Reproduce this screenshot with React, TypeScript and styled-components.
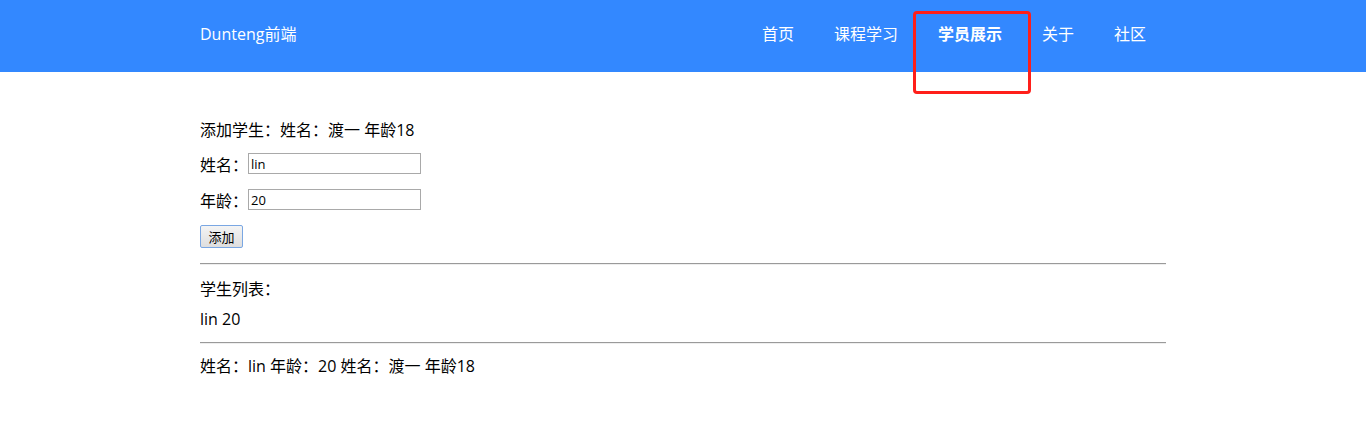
import React from "react";
import styled, { createGlobalStyle } from "styled-components";

const Global = createGlobalStyle`
  html, body { margin: 0; padding: 0; background: #fff; }
  body { font-family: "Open Sans", "Noto Sans CJK SC", sans-serif; color: #000; }
`;

const Header = styled.header`
  height: 72px;
  background: #3388ff;
`;

const Inner = styled.div`
  box-sizing: border-box;
  width: 966px;
  margin: 0 auto;
  height: 100%;
  display: flex;
  align-items: center;
  justify-content: space-between;
`;

const Brand = styled.div`
  color: #fff;
  font-size: 16px;
  line-height: 21px;
  margin-bottom: 3px;
`;

const Nav = styled.nav`
  display: flex;
  height: 100%;
`;

const NavItem = styled.a<{ $active?: boolean }>`
  position: relative;
  display: flex;
  align-items: center;
  box-sizing: border-box;
  height: 100%;
  padding: 0 20px 3px;
  color: #fff;
  font-size: 16px;
  line-height: 21px;
  font-weight: ${(p) => (p.$active ? 700 : 400)};
  text-decoration: none;
`;

const Highlight = styled.span`
  position: absolute;
  left: -5px;
  top: 11px;
  width: 118px;
  height: 83px;
  box-sizing: border-box;
  border: 3px solid #ff1f1a;
  border-radius: 4px;
  pointer-events: none;
`;

const Main = styled.main`
  width: 966px;
  margin: 0 auto;
  padding-top: 48px;
  font-size: 16px;
`;

const Line = styled.div<{ $mt?: number }>`
  line-height: 21px;
  margin-top: ${(p) => p.$mt ?? 0}px;
`;

const Row = styled.label<{ $mt: number }>`
  display: flex;
  align-items: center;
  height: 21px;
  margin-top: ${(p) => p.$mt}px;
`;

const Input = styled.input`
  box-sizing: border-box;
  width: 173px;
  height: 21px;
  margin: 0;
  padding: 0 2px;
  border: 1px solid #a9a9a9;
  font-family: "Open Sans", "Noto Sans CJK SC", sans-serif;
  font-size: 13px;
  outline: none;
`;

const Button = styled.button`
  display: block;
  box-sizing: border-box;
  width: 43px;
  height: 23px;
  margin-top: 15px;
  padding: 0;
  border: 1px solid #7aa7e3;
  border-radius: 2px;
  background: linear-gradient(#f4f4f4, #dedede);
  font-family: "Noto Sans CJK SC", sans-serif;
  font-size: 13px;
  color: #000;
`;

const Rule = styled.hr<{ $mt: number }>`
  margin: ${(p) => p.$mt}px 0 0;
  border: 0;
  border-top: 1px solid #9a9a9a;
  border-bottom: 1px solid #eeeeee;
  height: 0;
`;

export default function App() {
  return (
    <>
      <Global />
      <Header>
        <Inner>
          <Brand>Dunteng前端</Brand>
          <Nav>
            <NavItem>首页</NavItem>
            <NavItem>课程学习</NavItem>
            <NavItem $active>
              学员展示
              <Highlight />
            </NavItem>
            <NavItem>关于</NavItem>
            <NavItem>社区</NavItem>
          </Nav>
        </Inner>
      </Header>
      <Main>
        <Line>添加学生：姓名：渡一 年龄18</Line>
        <Row $mt={12}>
          姓名：<Input defaultValue="lin" />
        </Row>
        <Row $mt={15}>
          年龄：<Input defaultValue="20" />
        </Row>
        <Button>添加</Button>
        <Rule $mt={15} />
        <Line $mt={14}>学生列表：</Line>
        <Line $mt={9}>lin 20</Line>
        <Rule $mt={12} />
        <Line $mt={12}>姓名：lin 年龄：20 姓名：渡一 年龄18</Line>
      </Main>
    </>
  );
}
